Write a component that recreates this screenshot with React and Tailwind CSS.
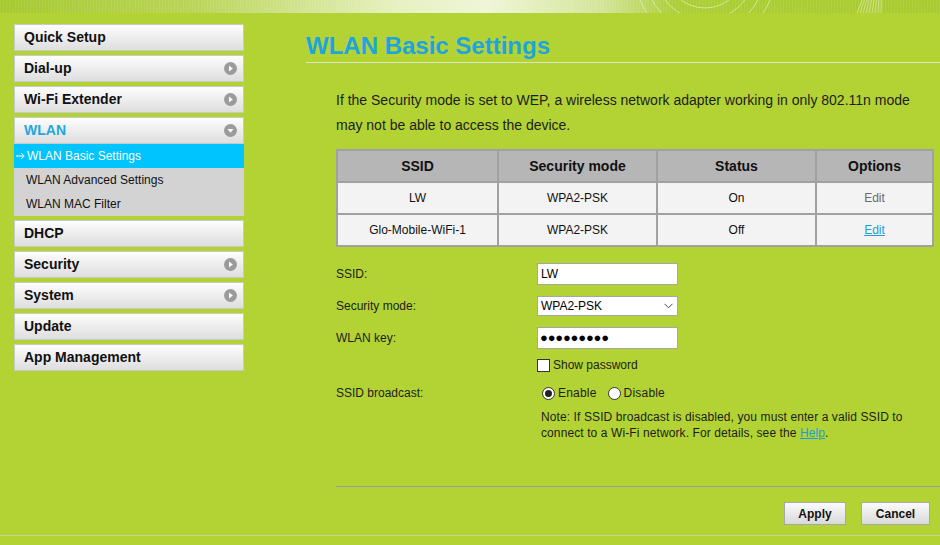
import React from "react";

const Arrow = ({ down }) => (
  <svg width="13" height="13" viewBox="0 0 13 13" className="shrink-0">
    <circle cx="6.5" cy="6.5" r="6.5" fill="#9b9b9b" />
    {down ? (
      <polygon points="3.5,5 9.5,5 6.5,8.8" fill="#fff" />
    ) : (
      <polygon points="5,3.5 5,9.5 8.8,6.5" fill="#fff" />
    )}
  </svg>
);

const MenuItem = ({ label, arrow, down, active }) => (
  <div className="h-[27px] flex items-center justify-between pl-[9px] pr-[6px] border border-[#c9c9c9] bg-gradient-to-b from-[#fdfdfd] to-[#dedede]">
    <span className={`text-[14px] font-bold ${active ? "text-[#21a7e0]" : "text-[#111]"}`}>{label}</span>
    {arrow && <Arrow down={down} />}
  </div>
);

export default function App() {
  return (
    <div className="w-[940px] h-[545px] bg-[#b3d334] relative overflow-hidden" style={{ fontFamily: '"Liberation Sans", Arial, sans-serif' }}>
      {/* banner */}
      <div className="h-[13px] w-full relative overflow-hidden bg-[linear-gradient(to_right,#a6c92f_0%,#b9d456_20%,#e6f0c0_42%,#eff5d6_52%,#d4e59a_64%,#acce36_72%,#a9cb30_100%)]">
        <svg width="940" height="13" className="absolute left-0 top-0">
          {[20, 30, 40, 50, 60, 70].map((r) => (
            <circle key={r} cx="705" cy={-40 + r * 0.2} r={r} fill="none" stroke="#f4f8e0" strokeOpacity="0.7" strokeWidth="0.8" />
          ))}
          {[0, 3, 6, 9, 12, 15, 18, 21, 24].map((d) => (
            <line key={d} x1={857 + d} y1="13" x2={862 + d * 0.8} y2="0" stroke="#eef5d0" strokeOpacity="0.7" strokeWidth="0.8" />
          ))}
        </svg>
        <div className="absolute inset-0 bg-[repeating-linear-gradient(to_right,rgba(255,255,255,0.08)_0px,rgba(255,255,255,0.08)_1px,transparent_1px,transparent_3px)]" />
      </div>

      <div className="flex">
        {/* sidebar */}
        <div className="ml-[14px] mt-[11px] w-[230px] flex flex-col gap-[4px]">
          <MenuItem label="Quick Setup" />
          <MenuItem label="Dial-up" arrow />
          <MenuItem label="Wi-Fi Extender" arrow />
          <div className="flex flex-col">
            <MenuItem label="WLAN" arrow down active />
            <div className="bg-[#d3d3d3] flex flex-col text-[12px]">
              <div className="h-[24px] flex items-center bg-[#00c4fd] text-white pl-[2px]">
                <svg width="9" height="8" viewBox="0 0 9 8" className="mr-[2px]">
                  <line x1="0" y1="4" x2="8" y2="4" stroke="#fff" strokeWidth="1" />
                  <polyline points="5,1 8.2,4 5,7" fill="none" stroke="#fff" strokeWidth="1" />
                </svg>
                WLAN Basic Settings
              </div>
              <div className="h-[24px] flex items-center pl-[12px] text-[#111]">WLAN Advanced Settings</div>
              <div className="h-[24px] flex items-center pl-[12px] text-[#111]">WLAN MAC Filter</div>
            </div>
          </div>
          <MenuItem label="DHCP" />
          <MenuItem label="Security" arrow />
          <MenuItem label="System" arrow />
          <MenuItem label="Update" />
          <MenuItem label="App Management" />
        </div>

        {/* main */}
        <div className="ml-[62px] flex-1 pt-[19px]">
          <div className="h-[28px] leading-[28px] text-[24px] font-bold text-[#1ca5de]">WLAN Basic Settings</div>
          <div className="mt-[2px] h-px bg-[#dde3c4]" />
          <div className="pl-[30px] pr-[6px]">
            <p className="mt-[25px] text-[14px] leading-[25px] text-[#1d1d1d]">
              If the Security mode is set to WEP, a wireless network adapter working in only 802.11n mode may not be able to access the device.
            </p>

            <table className="mt-[11px] w-[598px] border-collapse text-center text-[#111] bg-[#f3f3f3]">
              <thead>
                <tr className="h-[32px] bg-[#b6b6b6] text-[14px] font-bold">
                  <th className="w-[161px] border-2 border-[#a1a1a1]">SSID</th>
                  <th className="w-[159px] border-2 border-[#a1a1a1]">Security mode</th>
                  <th className="w-[159px] border-2 border-[#a1a1a1]">Status</th>
                  <th className="border-2 border-[#a1a1a1]">Options</th>
                </tr>
              </thead>
              <tbody className="text-[12px]">
                <tr className="h-[32px]">
                  <td className="border-2 border-[#a1a1a1]">LW</td>
                  <td className="border-2 border-[#a1a1a1]">WPA2-PSK</td>
                  <td className="border-2 border-[#a1a1a1]">On</td>
                  <td className="border-2 border-[#a1a1a1] text-[#6b6b6b]">Edit</td>
                </tr>
                <tr className="h-[32px]">
                  <td className="border-2 border-[#a1a1a1]">Glo-Mobile-WiFi-1</td>
                  <td className="border-2 border-[#a1a1a1]">WPA2-PSK</td>
                  <td className="border-2 border-[#a1a1a1]">Off</td>
                  <td className="border-2 border-[#a1a1a1] text-[#1a9fd9] underline">Edit</td>
                </tr>
              </tbody>
            </table>

            <div className="text-[12px] text-[#1d1d1d]">
              <div className="mt-[16px] flex items-center h-[22px]">
                <div className="w-[201px]">SSID:</div>
                <div className="w-[141px] h-[22px] bg-white border border-[#a6a6a6] flex items-center pl-[3px] text-black">LW</div>
              </div>
              <div className="mt-[11px] flex items-center h-[20px]">
                <div className="w-[201px]">Security mode:</div>
                <div className="w-[141px] h-[20px] bg-white border border-[#a6a6a6] flex items-center justify-between pl-[3px] pr-[4px] text-black">
                  <span>WPA2-PSK</span>
                  <svg width="9" height="6" viewBox="0 0 9 6"><polyline points="0.5,0.8 4.5,4.8 8.5,0.8" fill="none" stroke="#444" strokeWidth="1" /></svg>
                </div>
              </div>
              <div className="mt-[11px] flex items-center h-[22px]">
                <div className="w-[201px]">WLAN key:</div>
                <div className="w-[141px] h-[22px] bg-white border border-[#a6a6a6] flex items-center pl-[2px] text-black text-[13px] tracking-[-0.2px]">●●●●●●●●●</div>
              </div>
              <div className="mt-[8px] flex items-center h-[16px] pl-[201px]">
                <div className="w-[13px] h-[13px] bg-white border border-[#333]" />
                <span className="ml-[3px]">Show password</span>
              </div>
              <div className="mt-[12px] flex items-center h-[16px]">
                <div className="w-[206px]">SSID broadcast:</div>
                <div className="w-[13px] h-[13px] rounded-full bg-white border border-[#333] flex items-center justify-center">
                  <div className="w-[7px] h-[7px] rounded-full bg-[#222]" />
                </div>
                <span className="ml-[3px] tracking-[0.2px]">Enable</span>
                <div className="ml-[11px] w-[13px] h-[13px] rounded-full bg-white border border-[#333]" />
                <span className="ml-[3px] tracking-[0.2px]">Disable</span>
              </div>
              <p className="mt-[8px] ml-[205px] leading-[16px] w-[385px] tracking-[0.1px]">
                Note: If SSID broadcast is disabled, you must enter a valid SSID to connect to a Wi-Fi network. For details, see the <span className="text-[#1a9fd9] underline">Help</span>.
              </p>
            </div>
          </div>
          <div className="ml-[30px] mt-[45px] h-px bg-[#9c9c9c]" />
          <div className="mt-[15px] flex justify-end gap-[15px] pr-[10px]">
            <div className="w-[62px] h-[23px] flex items-center justify-center text-[12px] font-bold text-[#111] border border-[#a8a8a8] bg-gradient-to-b from-[#fbfbfb] to-[#d9d9d9]">Apply</div>
            <div className="w-[69px] h-[23px] flex items-center justify-center text-[12px] font-bold text-[#111] border border-[#a8a8a8] bg-gradient-to-b from-[#fbfbfb] to-[#d9d9d9]">Cancel</div>
          </div>
        </div>
      </div>
      <div className="absolute left-0 right-0 top-[535px] h-px bg-[#c4d38e]" />
    </div>
  );
}
